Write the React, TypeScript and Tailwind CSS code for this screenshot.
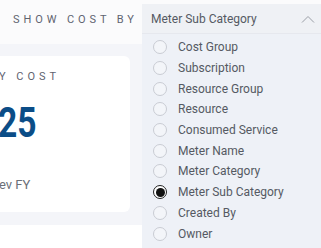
import React from 'react';

const options = [
  'Cost Group',
  'Subscription',
  'Resource Group',
  'Resource',
  'Consumed Service',
  'Meter Name',
  'Meter Category',
  'Meter Sub Category',
  'Created By',
  'Owner',
];

const selected = 'Meter Sub Category';

export default function App() {
  return (
    <div className="relative w-[321px] h-[248px] overflow-hidden bg-[#f4f5f9] font-['Roboto',sans-serif]">
      {/* top bar */}
      <div className="h-[44px] bg-[#fbfbfc] flex items-start pt-[12px] pl-[13px]">
        <span className="text-[11px] tracking-[3.9px] text-[#5f6470] leading-[16px]">SHOW COST BY</span>
      </div>

      {/* cost card */}
      <div className="flex flex-col w-[142px]">
        <div className="mt-[12px] -ml-[70px] w-[200px] h-[156px] bg-white rounded-[6px] pl-[70px] pt-[13px]">
          <div className="text-[11px] tracking-[4px] text-[#5f6470] leading-[16px] -ml-[1px] whitespace-nowrap">Y COST</div>
          <div className="text-[43px] font-bold text-[#0b4d87] leading-[43px] mt-[16px] -ml-[2px] scale-x-[0.78] origin-left whitespace-nowrap">25</div>
          <div className="text-[13px] text-[#6b6f78] leading-[16px] mt-[33px] -ml-[1px] whitespace-nowrap">ev FY</div>
        </div>
        <div className="mt-[13px] h-[30px] bg-white" />
      </div>

      {/* dropdown */}
      <div className="absolute left-[142px] top-[4px] w-[179px] bottom-0 flex flex-col">
        <div className="h-[30px] bg-[#eff1f5] border-b border-[#e6e8ee] flex items-center justify-between pl-[9px] pr-[6px]">
          <span className="text-[12px] text-[#555a63]">Meter Sub Category</span>
          <svg width="14" height="8" viewBox="0 0 14 8" fill="none" className="mt-[1px]">
            <path d="M1 7.5L7 1.5L13 7.5" stroke="#9a9ea6" strokeWidth="1" />
          </svg>
        </div>
        <div className="flex-1 bg-[#eef1f7] pt-[3px]">
          {options.map((o) => (
            <div key={o} className="h-[20.7px] flex items-center pl-[11px]">
              {o === selected ? (
                <span className="w-[14px] h-[14px] rounded-full border border-[#222] flex items-center justify-center bg-white">
                  <span className="w-[9px] h-[9px] rounded-full bg-[#111]" />
                </span>
              ) : (
                <span className="w-[14px] h-[14px] rounded-full border border-[#c9ccd3] bg-[#f3f5f9]" />
              )}
              <span className="ml-[11px] text-[12px] text-[#555a63]">{o}</span>
            </div>
          ))}
        </div>
      </div>
    </div>
  );
}
